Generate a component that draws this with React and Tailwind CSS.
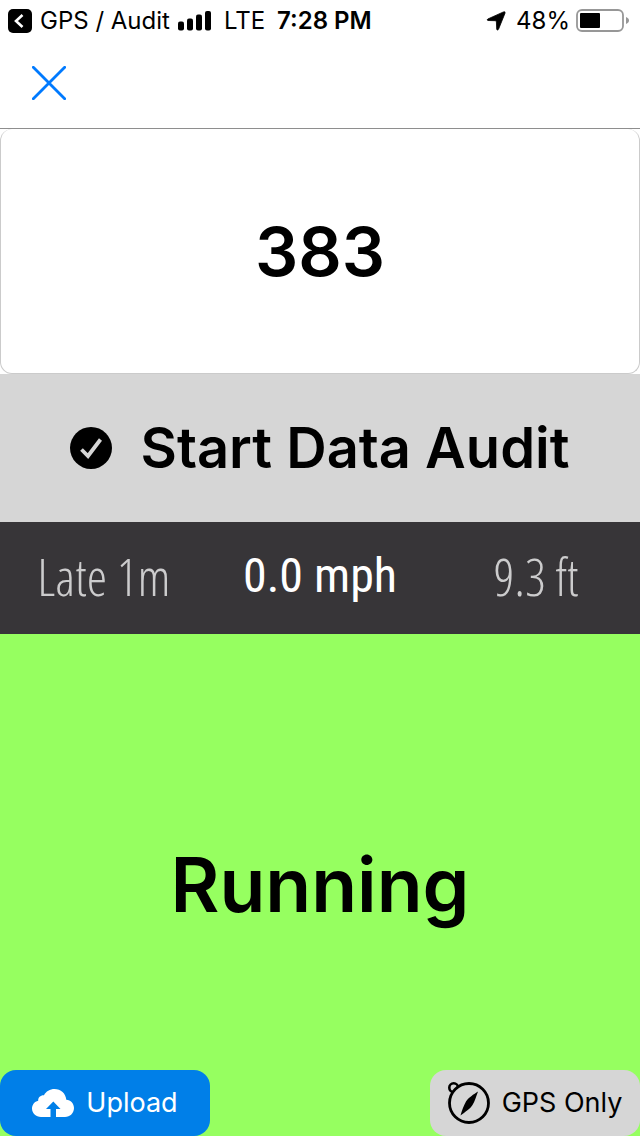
import { useState } from 'react'

function SignalBars() {
  return (
    <svg className="w-[34px] h-5" viewBox="0 0 34 20" aria-hidden="true">
      <rect x="0" y="10.500" width="6" height="9" rx="2" />
      <rect x="9" y="7.500" width="6" height="12" rx="2" />
      <rect x="18" y="3.500" width="6" height="16" rx="2" />
      <rect x="27" y="0" width="6" height="19.500" rx="2" />
    </svg>
  )
}

function Battery() {
  return (
    <svg className="w-[54px] h-6" viewBox="0 0 54 24" aria-hidden="true">
      <rect x="1" y="1" width="46" height="21" rx="5" fill="none" stroke="#979797" strokeWidth="1.8" />
      <rect x="4" y="4" width="20" height="15" rx="1" />
      <path d="M50 8c2 .8 3 2 3 3.500s-1 2.700-3 3.500z" fill="#979797" />
    </svg>
  )
}

function StatusBar() {
  return (
    <div className="h-[42px] pl-2 pr-2.5 flex items-center justify-between text-2xl">
      <div className="flex items-center">
        <button aria-label="Back" className="mr-2">
          <svg className="w-6 h-6" viewBox="0 0 24 24">
            <rect width="24" height="24" rx="5" />
            <path d="M14.500 6 8 12l6.500 6" fill="none" stroke="#fff" strokeWidth="2.600" />
          </svg>
        </button>
        <span className="mr-2">GPS / Audit</span>
        <SignalBars />
        <span className="mx-3">LTE</span>
        <span className="font-semibold">7:28 PM</span>
      </div>
      <div className="flex items-center gap-1.5">
        <svg className="w-5 h-5 mr-1" viewBox="0 0 20 20" aria-hidden="true">
          <path d="M17.500.900Q19.600.2 19 2.200L12.500 18.300Q11.400 20 10.700 18.200L10.400 10.800Q10.300 9.800 9.300 9.700L2 9.500Q.2 8.900 1.800 8z" stroke="#000" strokeWidth=".8" />
        </svg>
        <span>48%</span>
        <Battery />
      </div>
    </div>
  )
}

export default function App() {
  const [vehicle, setVehicle] = useState('383')

  return (
    <div className="min-h-screen flex flex-col bg-white text-black font-['Inter',sans-serif]">
      <StatusBar />

      <header className="h-[87px] px-8 pb-1 border-b border-[#8e8e8e] flex items-center">
        <button aria-label="Close">
          <svg className="w-[34px] h-[34px]" viewBox="0 0 34 34">
            <path d="M1.300 1.300l31.400 31.400M32.700 1.300L1.300 32.700" stroke="#007aff" strokeWidth="2.800" strokeLinecap="round" />
          </svg>
        </button>
      </header>

      <input
        aria-label="Vehicle number"
        value={vehicle}
        onChange={e => setVehicle(e.target.value)}
        className="block w-full h-[245px] rounded-xl border border-t-0 border-[#cbcbcb] bg-white text-center text-[68px] font-semibold"
      />

      <button className="h-[148px] bg-[#d6d6d6] flex items-center justify-center gap-7 text-[56px] font-semibold whitespace-nowrap">
        <svg className="w-[42px] h-[42px] shrink-0" viewBox="0 0 42 42" aria-hidden="true">
          <circle cx="21" cy="21" r="21" />
          <path d="M11.500 22.500l6.500 6.500L30.500 12.500" fill="none" stroke="#d6d6d6" strokeWidth="3.800" />
        </svg>
        Start Data Audit
      </button>

      {/* Trip stats */}
      <div className="h-28 pb-1 bg-[#373538] text-white grid grid-cols-[13fr_14fr_13fr] items-center text-center text-[52px] whitespace-nowrap font-['Open_Sans_Condensed_Light','Roboto_Condensed',sans-serif]">
        <span className="text-white/75">Late 1m</span>
        <span className="text-5xl font-['Roboto_Condensed','Roboto',sans-serif]">0.0 mph</span>
        <span className="text-white/75">9.3 ft</span>
      </div>

      <main className="relative flex-1 bg-[#96ff60] flex items-center justify-center">
        <h1 className="text-[75px] font-semibold">Running</h1>

        <div className="absolute inset-x-0 bottom-0 flex justify-between text-[27px]">
          <button className="w-[210px] h-[66px] rounded-2xl bg-[#007fe8] text-white flex items-center justify-center gap-3">
            <svg className="w-[42px] h-7" viewBox="0 0 42 28" fill="#fff" aria-hidden="true">
              <path d="M9 28C4 28 0 24.400 0 19.600c0-3.900 2.500-7 6.200-7.900C6 8.400 8.600 6 12 6.200 13.900 2.400 18 0 22.500 0c6.300 0 11.300 4.500 11.800 10.700C38.800 11 42 14.600 42 19c0 5-4 9-9 9h-9v-8h4.500L21.300 12.500 14 20h4.500v8z" />
            </svg>
            Upload
          </button>
          <button className="w-[210px] h-[66px] rounded-2xl bg-[#d6d6d6] flex items-center justify-center gap-3">
            <svg className="w-[42px] h-[42px]" viewBox="0 0 42 42" fill="none" stroke="#000" aria-hidden="true">
              <circle cx="5.700" cy="5.700" r="4.400" strokeWidth="2.600" />
              <circle cx="21" cy="21" r="19.500" strokeWidth="2.800" fill="#d6d6d6" />
              <path d="M30 9.500C26 12 20 16 18 19.500C16 23 14 28 12.500 33.500C17 30 22.500 26.500 24.500 23C27 19 28 14.500 30 9.500z" fill="#000" stroke="none" />
            </svg>
            GPS Only
          </button>
        </div>
      </main>
    </div>
  )
}
